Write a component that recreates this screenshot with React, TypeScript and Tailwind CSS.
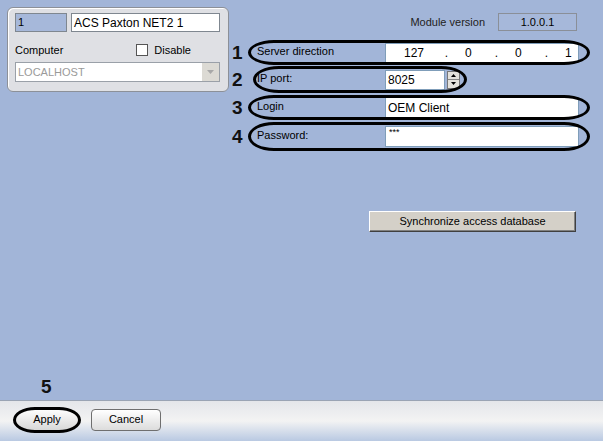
import React from "react";

const font = { fontFamily: '"Liberation Sans", Arial, sans-serif' };

function Ellipse({ className }: { className: string }) {
  return (
    <span
      className={`pointer-events-none absolute border-[3px] border-black rounded-[26px/50%] ${className}`}
    />
  );
}

function Num({ n }: { n: string }) {
  return (
    <div className="w-[19px] pl-[3px] text-[19px] font-bold leading-none text-[#111]">{n}</div>
  );
}

function TextBox({ value, className }: { value: string; className: string }) {
  return (
    <div
      className={`flex items-center border border-[#7f9db9] bg-white px-[2px] text-[11px] text-black ${className}`}
    >
      {value}
    </div>
  );
}

export default function App() {
  return (
    <div className="flex h-[441px] w-[603px] flex-col bg-[#a2b5d8] text-[11px] text-black" style={font}>
      <div className="flex flex-1">
        {/* left column */}
        <div className="flex w-[229px] flex-col">
          <div className="ml-[7px] mt-[7px] h-[85px] w-[222px] rounded-[6px] border border-[#8c9098] bg-[#dfe0e4] px-[7px] pt-[5px] shadow-[inset_1px_1px_0_#fff]">
            <div className="flex gap-[4px]">
              <div className="flex h-[19px] w-[52px] items-center border border-[#7f8790] bg-[#a6b8da] px-[2px]">1</div>
              <div className="flex h-[19px] w-[149px] items-center border border-[#7f8790] bg-white px-[2px] text-[12px]">
                ACS Paxton NET2 1
              </div>
            </div>
            <div className="mt-[11px] flex h-[14px] items-center">
              <span>Computer</span>
              <span className="ml-[73px] h-[12px] w-[12px] border border-[#555] bg-white" />
              <span className="ml-[6px]">Disable</span>
            </div>
            <div className="mt-[5px] flex h-[20px] w-[205px] border border-[#9aa0a8] bg-white">
              <div className="flex flex-1 items-center px-[2px] text-[#9a9a9a]">LOCALHOST</div>
              <div className="flex w-[17px] items-center justify-center bg-[#dcdad4]">
                <svg width="7" height="4" viewBox="0 0 7 4">
                  <path d="M0 0h7L3.5 4z" fill="#a8a8a8" />
                </svg>
              </div>
            </div>
          </div>
          <div className="mt-auto pb-[4px] pl-[41px] text-[19px] font-bold leading-none text-[#111]">5</div>
        </div>

        {/* right column */}
        <div className="flex flex-1 flex-col">
          <div className="flex items-center justify-end gap-[13px] pr-[26px] pt-[13px]">
            <span className="text-[#222]">Module version</span>
            <div className="flex h-[18px] w-[79px] items-center justify-center border border-[#8a8f98] bg-[#a6b8da]">
              1.0.0.1
            </div>
          </div>

          <div className="mt-[9px] flex h-[25px] items-center">
            <Num n="1" />
            <div className="relative mr-[13px] flex h-full flex-1 items-center pl-[9px]">
              <span className="w-[128px] pb-[2px]">Server direction</span>
              <div className="flex h-[20px] w-[194px] items-center border border-[#7f9db9] bg-white pl-[18px] text-[12px]">
                <span className="w-[24px]">127</span>
                <span className="w-[37px] text-center">.</span>
                <span className="w-[13px]">0</span>
                <span className="w-[37px] text-center">.</span>
                <span className="w-[13px]">0</span>
                <span className="w-[37px] text-center">.</span>
                <span>1</span>
              </div>
              <Ellipse className="inset-0" />
            </div>
          </div>

          <div className="mt-[1px] flex h-[27px] items-center">
            <Num n="2" />
            <div className="relative flex h-full w-[219px] items-center pl-[9px]">
              <span className="w-[128px] pb-[2px]">IP port:</span>
              <TextBox value="8025" className="h-[20px] w-[60px] text-[12px]" />
              <div className="ml-[2px] flex h-[18px] w-[13px] flex-col border border-[#777] bg-[#e4e2dc]">
                <div className="flex flex-1 items-center justify-center border-b border-[#888]">
                  <svg width="5" height="3" viewBox="0 0 5 3"><path d="M2.5 0L5 3H0z" fill="#000" /></svg>
                </div>
                <div className="flex flex-1 items-center justify-center">
                  <svg width="5" height="3" viewBox="0 0 5 3"><path d="M0 0h5L2.5 3z" fill="#000" /></svg>
                </div>
              </div>
              <Ellipse className="inset-y-0 left-[5px] right-0" />
            </div>
          </div>

          <div className="mt-[2px] flex h-[25px] items-center">
            <Num n="3" />
            <div className="relative mr-[13px] flex h-full flex-1 items-center pl-[9px]">
              <span className="w-[128px] pb-[2px]">Login</span>
              <TextBox value="OEM Client" className="h-[21px] w-[194px] text-[12px]" />
              <Ellipse className="inset-0" />
            </div>
          </div>

          <div className="mt-[2px] flex h-[29px] items-center">
            <Num n="4" />
            <div className="relative mr-[13px] flex h-full flex-1 items-center pl-[9px]">
              <span className="w-[128px] pb-[2px]">Password:</span>
              <div className="flex h-[21px] w-[194px] items-start border border-[#7f9db9] bg-white px-[3px] pt-[1px] text-[9px] leading-none">
                ***
              </div>
              <Ellipse className="inset-0" />
            </div>
          </div>

          <div className="mr-[27px] mt-[60px] flex h-[21px] w-[207px] items-center justify-center self-end border border-b-[#404040] border-l-white border-r-[#404040] border-t-white bg-[#d4d0c8] text-[11px] shadow-[inset_-1px_-1px_0_#808080]">
            Synchronize access database
          </div>
        </div>
      </div>

      {/* bottom bar */}
      <div className="flex h-[41px] items-center gap-[10px] border-t border-[#9aa4b4] bg-gradient-to-b from-[#e4e6ea] via-[#f3f3f3] to-[#b9c9e2] pb-[3px] pl-[13px]">
        <div className="flex h-[26px] w-[68px] items-center justify-center rounded-[22px/50%] border-[3px] border-black bg-gradient-to-b from-[#fdfdfd] to-[#d8d8d8]">
          Apply
        </div>
        <div className="flex h-[22px] w-[70px] items-center justify-center rounded-[4px] border border-[#6f6f6f] bg-gradient-to-b from-[#ffffff] to-[#dcdcdc]">
          Cancel
        </div>
      </div>
    </div>
  );
}
